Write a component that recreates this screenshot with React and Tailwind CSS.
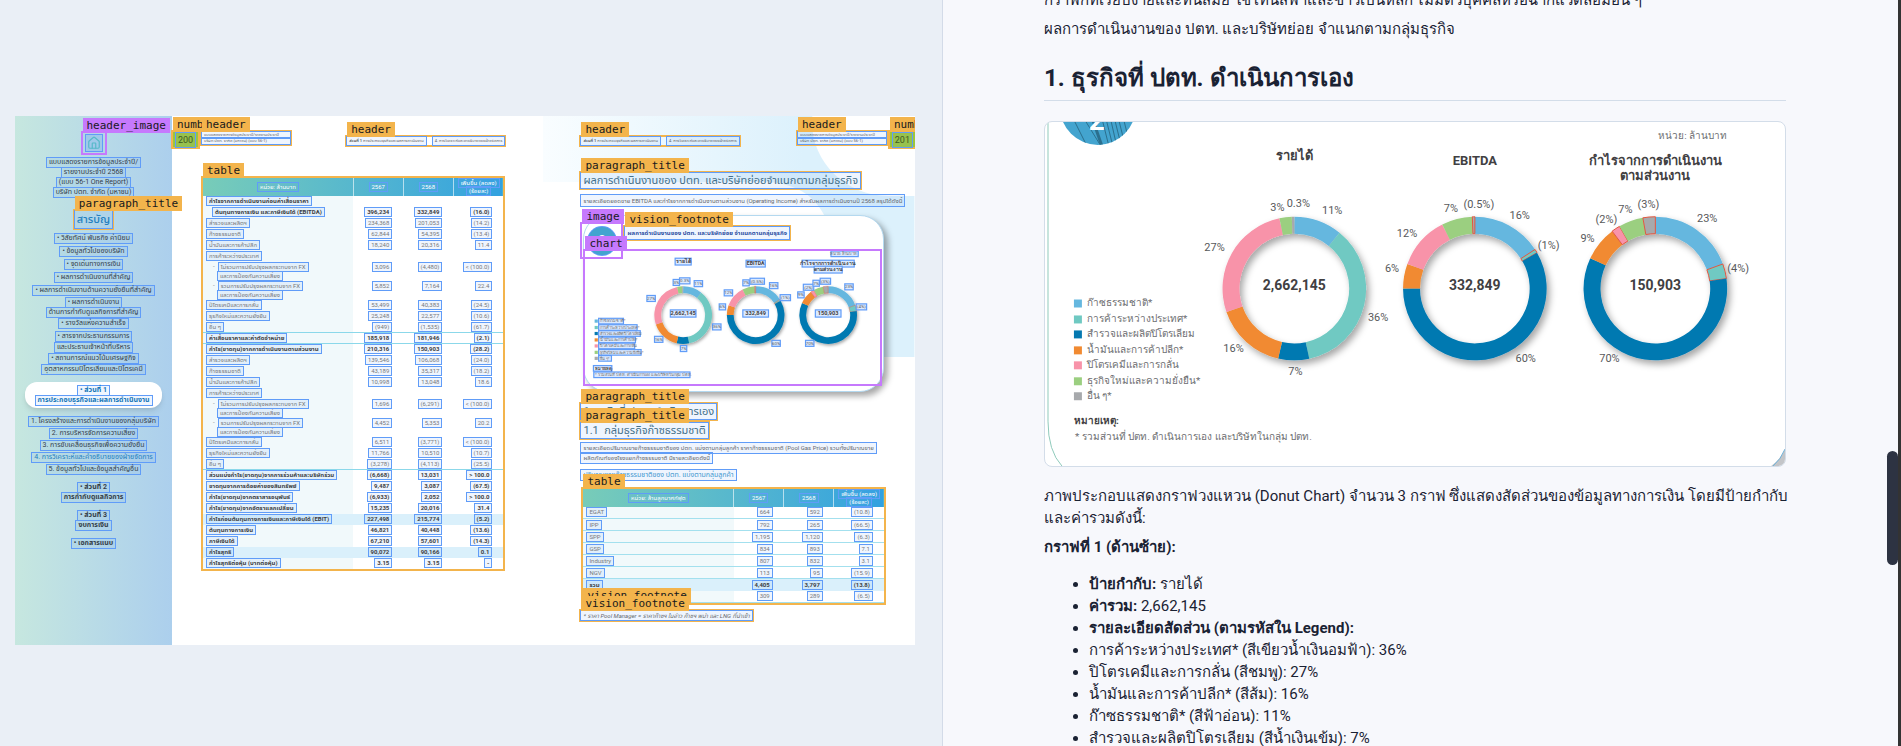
import clsx from "clsx";
import { House } from "lucide-react";

const COLORS = {
  gas: "#65b7df",
  trade: "#6fc9c2",
  explore: "#0579b1",
  oil: "#f18a31",
  petro: "#f893a9",
  fresh: "#9bcf80",
  other: "#a7a9ac",
};

const LEGEND = [
  { color: COLORS.gas, text: "ก๊าซธรรมชาติ*", width: 56 },
  { color: COLORS.trade, text: "การค้าระหว่างประเทศ*", width: 90 },
  { color: COLORS.explore, text: "สำรวจและผลิตปิโตรเลียม", width: 98 },
  { color: COLORS.oil, text: "น้ำมันและการค้าปลีก*", width: 86 },
  { color: COLORS.petro, text: "ปิโตรเคมีและการกลั่น", width: 84 },
  { color: COLORS.fresh, text: "ธุรกิจใหม่และความยั่งยืน*", width: 100 },
  { color: COLORS.other, text: "อื่น ๆ*", width: 26 },
];

// start angles in degrees, clockwise from the top
const DONUTS = [
  {
    cx: 250,
    total: "2,662,145",
    title: [["รายได้", 38, 34]],
    slices: [
      [0, 39, "gas"],
      [39, 168, "trade"],
      [168, 193, "explore"],
      [193, 251, "oil"],
      [251, 348, "petro"],
      [348, 358, "fresh"],
      [358, 360, "other"],
    ],
    labels: [
      ["3%", 233, 89],
      ["0.3%", 254, 85],
      ["11%", 288, 92],
      ["27%", 170, 129],
      ["36%", 334, 200],
      ["16%", 189, 231],
      ["7%", 251, 254],
    ],
  },
  {
    cx: 431,
    total: "332,849",
    title: [["EBITDA", 43, 42]],
    slices: [
      [0, 57, "gas"],
      [57, 60, "trade", true],
      [60, 270, "explore"],
      [270, 290, "oil"],
      [290, 333, "petro"],
      [333, 358, "fresh"],
      [358, 360, "other", true],
    ],
    labels: [
      ["7%", 407, 90],
      ["(0.5%)", 435, 86],
      ["16%", 476, 97],
      ["(1%)", 505, 127],
      ["12%", 363, 115],
      ["6%", 348, 150],
      ["60%", 482, 241],
    ],
  },
  {
    cx: 612,
    total: "150,903",
    title: [
      ["กำไรจากการดำเนินงาน", 43, 124],
      ["ตามส่วนงาน", 58, 64],
    ],
    slices: [
      [0, 70, "gas"],
      [70, 82, "trade", true],
      [82, 295, "explore"],
      [295, 323, "oil"],
      [323, 330, "petro", true],
      [330, 350, "fresh"],
      [350, 360, "other", true],
    ],
    labels: [
      ["(2%)", 563, 101],
      ["7%", 582, 91],
      ["(3%)", 605, 86],
      ["23%", 664, 100],
      ["9%", 544, 120],
      ["(4%)", 695, 150],
      ["70%", 566, 241],
    ],
  },
];

const CY = 167;

function slicePath(cx, from, to) {
  const point = (r, deg) => {
    const a = (deg * Math.PI) / 180;
    return `${cx + r * Math.sin(a)} ${CY - r * Math.cos(a)}`;
  };
  const large = to - from > 180 ? 1 : 0;
  return `M${point(72, from)} A72 72 0 ${large} 1 ${point(72, to)} L${point(55, to)} A55 55 0 ${large} 0 ${point(55, from)}Z`;
}

function ChartText({ boxed, x, y, width, size, className, anchor = "middle", children }) {
  const left = anchor === "middle" ? x - width / 2 : anchor === "end" ? x - width : x;
  return (
    <>
      {boxed && (
        <rect
          x={left - 3}
          y={y - size}
          width={width + 6}
          height={size + 4}
          fill="#dbe9fe"
          stroke="#609cf8"
          strokeWidth="3"
        />
      )}
      <text x={x} y={y} textAnchor={anchor} fontSize={size} className={className}>
        {children}
      </text>
    </>
  );
}

function DonutChart({ boxed = false, viewBox, className }) {
  const id = boxed ? "shadow-thumb" : "shadow-full";
  return (
    <svg viewBox={viewBox} className={clsx("block font-['Roboto','Noto_Sans',sans-serif]", className)} role="img">
      <defs>
        <filter id={id} x="-20%" y="-20%" width="140%" height="140%">
          <feDropShadow dx="3" dy="4" stdDeviation="4" floodColor="#000" floodOpacity="0.35" />
        </filter>
        <clipPath id={`${id}-logo`}>
          <circle cx="53" cy="-15" r="38" />
        </clipPath>
      </defs>
      {!boxed && (
        <>
          <circle cx="53" cy="-15" r="38" fill="#43a4cf" />
          <g clipPath={`url(#${id}-logo)`} stroke="#2b6f8e" strokeWidth="1" fill="none">
            <path d="M30 0 42 24M40 -2 56 24M58 0 64 24M62 0 68 24M66 -2 71 20M70 -2 75 18M74 -2 78 14M79 -2 82 10" />
            <path d="M48 -2 57 24" strokeWidth="3" />
          </g>
          <text x="52" y="8" textAnchor="middle" fontSize="28" className="fill-white font-bold">
            2
          </text>
          <path d="M3 0V300Q3 330 17 345" fill="none" stroke="#8fcabb" strokeWidth="1" />
          <path d="M742 328Q738 338 728 345H742Z" fill="#c3c5c8" />
          <path d="M742 328Q738 338 730 345" fill="none" stroke="#6fb3da" strokeWidth="1" />
        </>
      )}
      <ChartText boxed={boxed} x={684} y={17} width={62} size={10} anchor="end" className="fill-[#6d6e71]">
        หน่วย: ล้านบาท
      </ChartText>
      {DONUTS.map((d) => (
        <g key={d.total}>
          {d.title.map(([line, y, width]) => (
            <ChartText
              key={line}
              boxed={boxed}
              x={d.cx}
              y={y}
              width={width}
              size={13}
              className="fill-[#414042] font-bold"
            >
              {line}
            </ChartText>
          ))}
          <g filter={`url(#${id})`}>
            {d.slices.map(([from, to, name, negative]) => (
              <path
                key={name}
                d={slicePath(d.cx, from, to)}
                fill={COLORS[name]}
                stroke={negative ? "#e2563f" : "none"}
                strokeWidth="1"
              />
            ))}
          </g>
          <ChartText boxed={boxed} x={d.cx} y={168} width={58} size={14} className="fill-[#414042] font-bold">
            {d.total}
          </ChartText>
          {d.labels.map(([text, x, y]) => (
            <ChartText
              key={text}
              boxed={boxed}
              x={x}
              y={y}
              width={text.length * 5}
              size={11}
              className="fill-[#58595b]"
            >
              {text}
            </ChartText>
          ))}
        </g>
      ))}
      {LEGEND.map((item, i) => (
        <g key={item.text}>
          <rect x="29" y={178 + Math.round(i * 15.5)} width="8" height="8" fill={item.color} />
          <ChartText
            boxed={boxed}
            x={42}
            y={185 + Math.round(i * 15.5)}
            width={item.width}
            size={10}
            anchor="start"
            className="fill-[#6d6e71]"
          >
            {item.text}
          </ChartText>
        </g>
      ))}
      <ChartText boxed={boxed} x={29} y={303} width={40} size={10} anchor="start" className="fill-[#414042] font-bold">
        หมายเหตุ:
      </ChartText>
      <ChartText boxed={boxed} x={30} y={319} width={234} size={10} anchor="start" className="fill-[#6d6e71]">
        * รวมส่วนที่ ปตท. ดำเนินการเอง และบริษัทในกลุ่ม ปตท.
      </ChartText>
    </svg>
  );
}

// Blue outline around one recognised run of text
function Word({ className, children }) {
  return (
    <span
      className={clsx(
        "inline-block whitespace-nowrap bg-[#609cf8]/10 px-[2px] align-middle ring-1 ring-[#609cf8]",
        className
      )}
    >
      {children}
    </span>
  );
}

function Tag({ tone = "orange", className, children }) {
  return (
    <span
      className={clsx(
        "absolute z-10 whitespace-nowrap px-1 font-['DejaVu_Sans_Mono',monospace] text-[11px] leading-[15px] font-normal text-[#17191c]",
        tone === "orange" ? "bg-[#f3b44c]" : "bg-[#c679fd]",
        className
      )}
    >
      {children}
    </span>
  );
}

function Region({ label, tone = "orange", className, children }) {
  return (
    <div
      className={clsx(
        "relative shrink-0 ring-2",
        tone === "orange" ? "ring-[#f3b44c]" : "ring-[#c679fd]",
        className
      )}
    >
      <Tag tone={tone} className="bottom-full left-0">
        {label}
      </Tag>
      {children}
    </div>
  );
}

const TOC = [
  ["• วิสัยทัศน์ พันธกิจ ค่านิยม", "h-[13px]"],
  ["• ข้อมูลทั่วไปของบริษัท", "h-[13px]"],
  ["• จุดเด่นทางการเงิน", "h-[13px]"],
  ["• ผลการดำเนินงานที่สำคัญ", "h-[13px]"],
  ["• ผลการดำเนินงานด้านความยั่งยืนที่สำคัญ", "h-[13px]"],
  ["• ผลการดำเนินงาน", "h-[10px]"],
  ["ด้านการกำกับดูแลกิจการที่สำคัญ", "h-[10px]"],
  ["• รางวัลแห่งความสำเร็จ", "h-[13px]"],
  ["• สารจากประธานกรรมการ", "h-[12px]"],
  ["และประธานเจ้าหน้าที่บริหาร", "h-[10px]"],
  ["• สถานการณ์แนวโน้มเศรษฐกิจ", "h-[12px]"],
  ["อุตสาหกรรมปิโตรเลียมและปิโตรเคมี", "h-[10px]"],
];

const CHAPTERS = [
  "1. โครงสร้างและการดำเนินงานของกลุ่มบริษัท",
  "2. การบริหารจัดการความเสี่ยง",
  "3. การขับเคลื่อนธุรกิจเพื่อความยั่งยืน",
  "4. การวิเคราะห์และคำอธิบายของฝ่ายจัดการ",
  "5. ข้อมูลทั่วไปและข้อมูลสำคัญอื่น",
];

function Line({ className = "h-[10px]", children }) {
  return (
    <div className={clsx("flex items-center justify-center", className)}>
      <Word className="leading-[9px]">{children}</Word>
    </div>
  );
}

function Sidebar() {
  return (
    <nav className="w-[157px] shrink-0 bg-linear-to-r from-[#c6e7df] to-[#accfed] pt-[17px] pb-[97px] text-[7px] text-[#34404a]">
      <Region label="header_image" tone="purple" className="mx-auto w-fit">
        <div className="flex h-5 w-[22px] items-center justify-center bg-[#b4d7e6]">
          <div className="flex size-4 items-center justify-center bg-[#9fc9ea] ring-1 ring-[#609cf8]">
            <House className="size-[14px] text-[#56b9c9]" strokeWidth={2} />
          </div>
        </div>
      </Region>
      <div className="mt-1">
        <Line>แบบแสดงรายการข้อมูลประจำปี/</Line>
        <Line>รายงานประจำปี 2568</Line>
        <Line>(แบบ 56-1 One Report)</Line>
        <Line>บริษัท ปตท. จำกัด (มหาชน)</Line>
      </div>
      <Region label="paragraph_title" className="mx-auto mt-[14px] w-fit">
        <Word className="h-[17px] text-[11px] leading-[17px] font-medium text-[#2380c0]">สารบัญ</Word>
      </Region>
      <div className="mt-1">
        {TOC.map(([text, height]) => (
          <Line key={text} className={height}>
            {text}
          </Line>
        ))}
      </div>
      <div className="mx-[10px] mt-2 rounded-xl bg-white py-[3px] font-bold text-[#1476b8] shadow-md">
        <Line>• ส่วนที่ 1</Line>
        <Line>การประกอบธุรกิจและผลการดำเนินงาน</Line>
      </div>
      <div className="mt-[7px]">
        {CHAPTERS.map((text, i) => (
          <Line key={text} className={i === 3 ? "h-3 text-[#2380c0]" : "h-3"}>
            {text}
          </Line>
        ))}
      </div>
      <div className="mt-[7px] font-bold">
        <Line>• ส่วนที่ 2</Line>
        <Line>การกำกับดูแลกิจการ</Line>
      </div>
      <div className="mt-2 font-bold">
        <Line>• ส่วนที่ 3</Line>
        <Line>งบการเงิน</Line>
      </div>
      <div className="mt-2 font-bold">
        <Line>• เอกสารแนบ</Line>
      </div>
    </nav>
  );
}

const TRADE_FX = "ไม่รวมการปรับปรุงผลกระทบจาก FX";
const TRADE_FX_ALL = "รวมการปรับปรุงผลกระทบจาก FX";
const HEDGE = "และการป้องกันความเสี่ยง";

const RESULTS = [
  { kind: "bold", cells: ["กำไรจากการดำเนินงานก่อนค่าเสื่อมราคา"] },
  { kind: "boldIndent", cells: ["ต้นทุนทางการเงิน และภาษีเงินได้ (EBITDA)", "396,234", "332,849", "(16.0)"] },
  { cells: ["สำรวจและผลิตฯ", "234,368", "201,053", "(14.2)"] },
  { cells: ["ก๊าซธรรมชาติ", "62,844", "54,395", "(13.4)"] },
  { cells: ["น้ำมันและการค้าปลีก", "18,240", "20,316", "11.4"] },
  { cells: ["การค้าระหว่างประเทศ"] },
  { kind: "sub", cells: [TRADE_FX, "3,096", "(4,480)", "< (100.0)"] },
  { kind: "cont", cells: [HEDGE] },
  { kind: "sub", cells: [TRADE_FX_ALL, "5,852", "7,164", "22.4"] },
  { kind: "cont", cells: [HEDGE] },
  { cells: ["ปิโตรเคมีและการกลั่น", "53,499", "40,383", "(24.5)"] },
  { cells: ["ธุรกิจใหม่และความยั่งยืน", "25,248", "22,577", "(10.6)"] },
  { cells: ["อื่น ๆ", "(949)", "(1,535)", "(61.7)"] },
  { kind: "ruled", cells: ["ค่าเสื่อมราคาและค่าตัดจำหน่าย", "185,918", "181,946", "(2.1)"] },
  { kind: "bold", cells: ["กำไร(ขาดทุน)จากการดำเนินงานตามส่วนงาน", "210,316", "150,903", "(28.2)"] },
  { cells: ["สำรวจและผลิตฯ", "139,546", "106,068", "(24.0)"] },
  { cells: ["ก๊าซธรรมชาติ", "43,189", "35,317", "(18.2)"] },
  { cells: ["น้ำมันและการค้าปลีก", "10,998", "13,048", "18.6"] },
  { cells: ["การค้าระหว่างประเทศ"] },
  { kind: "sub", cells: [TRADE_FX, "1,696", "(6,291)", "< (100.0)"] },
  { kind: "cont", cells: [HEDGE] },
  { kind: "sub", cells: [TRADE_FX_ALL, "4,452", "5,353", "20.2"] },
  { kind: "cont", cells: [HEDGE] },
  { cells: ["ปิโตรเคมีและการกลั่น", "6,511", "(3,771)", "< (100.0)"] },
  { cells: ["ธุรกิจใหม่และความยั่งยืน", "11,766", "10,510", "(10.7)"] },
  { cells: ["อื่น ๆ", "(3,278)", "(4,113)", "(25.5)"] },
  { kind: "topRule", cells: ["ส่วนแบ่งกำไร(ขาดทุน)จากการร่วมค้าและบริษัทร่วม", "(6,668)", "13,031", "> 100.0"] },
  { kind: "bold", cells: ["ขาดทุนจากการด้อยค่าของสินทรัพย์", "9,487", "3,087", "(67.5)"] },
  { kind: "bold", cells: ["กำไร(ขาดทุน)จากตราสารอนุพันธ์", "(6,933)", "2,052", "> 100.0"] },
  { kind: "bold", cells: ["กำไร(ขาดทุน)จากอัตราแลกเปลี่ยน", "15,235", "20,016", "31.4"] },
  { kind: "total", cells: ["กำไรก่อนต้นทุนทางการเงินและภาษีเงินได้ (EBIT)", "227,498", "215,774", "(5.2)"] },
  { kind: "bold", cells: ["ต้นทุนทางการเงิน", "46,821", "40,448", "(13.6)"] },
  { kind: "bold", cells: ["ภาษีเงินได้", "67,210", "57,601", "(14.3)"] },
  { kind: "total", cells: ["กำไรสุทธิ", "90,072", "90,166", "0.1"] },
  { kind: "bold", cells: ["กำไรสุทธิต่อหุ้น (บาทต่อหุ้น)", "3.15", "3.15", "-"] },
];

const GAS = [
  { kind: "line", cells: ["EGAT", "664", "592", "(10.8)"] },
  { kind: "line", cells: ["IPP", "792", "265", "(66.5)"] },
  { kind: "line", cells: ["SPP", "1,195", "1,120", "(6.3)"] },
  { kind: "line", cells: ["GSP", "834", "893", "7.1"] },
  { kind: "line", cells: ["Industry", "807", "832", "3.1"] },
  { kind: "line", cells: ["NGV", "113", "95", "(15.9)"] },
  { kind: "total", cells: ["รวม", "4,405", "3,797", "(13.8)"] },
  { kind: "line", cells: ["", "309", "289", "(6.5)"] },
];

const ROW_STYLE = {
  bold: "font-bold text-[#3c4043]",
  boldIndent: "font-bold text-[#3c4043]",
  ruled: "border-y border-[#8bd8ea] font-bold text-[#3c4043]",
  topRule: "border-t border-[#8bd8ea] font-bold text-[#3c4043]",
  total: "bg-[#daf0fb] font-bold text-[#3c4043]",
  line: "border-b border-[#a3e0ee]",
};

function ReportTable({ unit, rows, rowHeight }) {
  return (
    <table className="w-full table-fixed border-collapse text-[6px] leading-[8px] text-[#77797c]">
      <thead>
        <tr className="h-[18px] bg-linear-to-r from-[#78ccb8] to-[#31a1e0] text-white">
          <th className="w-1/2 border-r border-white/60 p-0 font-normal">
            <Word>{unit}</Word>
          </th>
          <th className="border-r border-white/60 p-0 font-normal">
            <Word>2567</Word>
          </th>
          <th className="border-r border-white/60 p-0 font-normal">
            <Word>2568</Word>
          </th>
          <th className="p-0 font-normal">
            <Word>เพิ่มขึ้น (ลดลง)</Word>
            <Word>(ร้อยละ)</Word>
          </th>
        </tr>
      </thead>
      <tbody>
        {rows.map(({ kind, cells }, i) => (
          <tr
            key={i}
            className={clsx(
              kind === "cont" ? "h-[9px]" : kind === "sub" ? "h-[10px]" : rowHeight,
              ROW_STYLE[kind]
            )}
          >
            <td
              className={clsx(
                "p-0 text-left leading-none",
                kind !== "total" && "bg-[#f1f9fb]",
                kind === "boldIndent" && "pl-[10px]",
                kind === "sub" && "pl-[10px]",
                kind === "cont" && "pl-[15px]",
                !["boldIndent", "sub", "cont"].includes(kind) && "pl-1"
              )}
            >
              {kind === "sub" && <span className="mr-1">-</span>}
              {cells[0] && <Word className="leading-[8px]">{cells[0]}</Word>}
            </td>
            {[1, 2, 3].map((n) => (
              <td key={n} className="p-0 pr-3 text-right leading-none">
                {cells[n] && <Word className="leading-[8px]">{cells[n]}</Word>}
              </td>
            ))}
          </tr>
        ))}
      </tbody>
    </table>
  );
}

function RunningTitle() {
  return (
    <Region label="header" className="mt-[5px] flex w-fit gap-[7px] text-[4px] leading-[8px] text-[#5c6064]">
      <Word>
        <b>ส่วนที่ 1</b> การประกอบธุรกิจและผลการดำเนินงาน
      </Word>
      <Word>4. การวิเคราะห์และคำอธิบายของฝ่ายจัดการ</Word>
    </Region>
  );
}

function RunningReport() {
  return (
    <Region label="header" className="flex w-[88px] flex-col text-[4px] leading-[6px] text-[#5c6064]">
      <Word>แบบแสดงรายการข้อมูลประจำปี/รายงานประจำปี</Word>
      <Word>บริษัท ปตท. จำกัด (มหาชน) (แบบ 56-1)</Word>
    </Region>
  );
}

function PageNumber({ children }) {
  return (
    <Region label="number" className="w-[25px] bg-[#9dc63c] text-center text-[9px] leading-[14px] text-[#3e5a20]">
      <Word>{children}</Word>
    </Region>
  );
}

function LeftPage() {
  return (
    <section className="min-w-0 flex-1 pt-4">
      <div className="flex items-start justify-between pr-[39px] pl-px">
        <div className="flex items-start gap-1">
          <PageNumber>200</PageNumber>
          <RunningReport />
        </div>
        <RunningTitle />
      </div>
      <div className="relative mt-[31px] mr-[40px] ml-[31px] ring-2 ring-[#f3b44c]">
        <Tag className="bottom-full left-0">table</Tag>
        <ReportTable unit="หน่วย: ล้านบาท" rows={RESULTS} rowHeight="h-[11px]" />
      </div>
    </section>
  );
}

function RightPage() {
  return (
    <section className="relative min-w-0 flex-1 overflow-hidden pt-4">
      <svg className="absolute inset-0 size-full" viewBox="0 0 371 529" preserveAspectRatio="none" aria-hidden="true">
        <defs>
          <linearGradient id="sky" x1="0" x2="1">
            <stop offset="0" stopColor="#f9fdff" />
            <stop offset="0.7" stopColor="#dcf1fc" />
            <stop offset="1" stopColor="#dcf1fc" />
          </linearGradient>
        </defs>
        <path
          d="M0 0H269C265 42 300 80 345 80H371V241H290V130C285 90 262 66 220 66H0Z"
          fill="url(#sky)"
        />
      </svg>
      <div className="relative flex flex-col pl-[38px] text-[6px] text-[#66696d]">
        <div className="flex items-start justify-between">
          <RunningTitle />
          <div className="flex items-start gap-1">
            <RunningReport />
            <PageNumber>201</PageNumber>
          </div>
        </div>

        <Region label="paragraph_title" className="mt-[26px] flex w-fit">
          <Word className="text-[11px] leading-[15px] text-[#44708a]">
            ผลการดำเนินงานของ ปตท. และบริษัทย่อยจำแนกตามกลุ่มธุรกิจ
          </Word>
        </Region>
        <Word className="mt-[7px] w-fit leading-[11px]">
          รายละเอียดยอดขาย EBITDA และกำไรจากการดำเนินงานตามส่วนงาน (Operating Income) สำหรับผลการดำเนินงานปี 2568 สรุปได้ดังนี้
        </Word>

        <div className="mt-[9px] mr-[31px] ml-[2px] rounded-3xl border border-[#b4d9f0] bg-white pt-2 pb-[7px] shadow-[4px_4px_6px_rgba(0,0,0,0.35)]">
          <div className="-ml-[2px] flex items-start gap-1">
            <Region label="image" tone="purple" className="flex h-[33px] w-[39px] justify-center pt-[3px]">
              <div className="size-7 rounded-full bg-[#43a4cf] text-center text-[14px] leading-7 font-bold text-white ring-1 ring-[#609cf8]">
                2
              </div>
            </Region>
            <Region label="vision_footnote" className="mt-[3px] flex w-fit">
              <Word className="text-[6px] leading-3 font-bold text-[#2b4ea2]">
                ผลการดำเนินงานของ ปตท. และบริษัทย่อย จำแนกตามกลุ่มธุรกิจ
              </Word>
            </Region>
          </div>
          <div className="relative -mt-[6px] mr-[3px] ml-px ring-2 ring-[#c679fd]">
            <Tag tone="purple" className="bottom-full left-0">
              chart
            </Tag>
            <DonutChart boxed viewBox="5 7 735 332" className="w-full" />
          </div>
        </div>

        <Region label="paragraph_title" className="mt-3 flex w-fit">
          <Word className="text-[11px] leading-[15px] text-[#44708a]">1. ธุรกิจที่ ปตท. ดำเนินการเอง</Word>
        </Region>
        <Region label="paragraph_title" className="mt-1 flex w-fit">
          <Word className="text-[11px] leading-[15px] text-[#44708a]">1.1&nbsp; กลุ่มธุรกิจก๊าซธรรมชาติ</Word>
        </Region>
        <Word className="mt-[5px] w-fit leading-[10px]">
          รายละเอียดปริมาณขายก๊าซธรรมชาติของ ปตท. แบ่งตามกลุ่มลูกค้า ราคาก๊าซธรรมชาติ (Pool Gas Price) รวมทั้งปริมาณขาย
        </Word>
        <Word className="w-fit leading-[10px]">ผลิตภัณฑ์ของโรงแยกก๊าซธรรมชาติ มีรายละเอียดดังนี้</Word>
        <Word className="mt-[7px] w-fit text-[7px] leading-[10px] text-[#3f97cf]">
          ปริมาณขายก๊าซธรรมชาติของ ปตท. แบ่งตามกลุ่มลูกค้า
        </Word>

        <div className="relative mt-[9px] mr-[31px] ml-[2px] ring-2 ring-[#f3b44c]">
          <Tag className="bottom-full left-0">table</Tag>
          <ReportTable unit="หน่วย: ล้านลูกบาศก์ฟุต" rows={GAS} rowHeight="h-[12px]" />
          <Tag className="bottom-0 left-0">vision_footnote</Tag>
        </div>
        <Region label="vision_footnote" className="mt-[8px] flex w-fit">
          <Word className="leading-[9px] italic">* ราคา Pool Manager = ราคาก๊าซฯ ในอ่าว ก๊าซฯ พม่า และ LNG ที่นำเข้า</Word>
        </Region>
      </div>
    </section>
  );
}

function ScanPane() {
  return (
    <div className="flex w-[49.6%] shrink-0 items-center border-r border-[#d3dbe8] bg-[#eaeff6] pt-[15px] pr-[27px] pl-[15px]">
      <div className="flex min-w-0 flex-1 bg-white font-['Roboto','Noto_Sans_Thai',sans-serif]">
        <Sidebar />
        <LeftPage />
        <RightPage />
      </div>
    </div>
  );
}

const DETAILS = [
  "การค้าระหว่างประเทศ* (สีเขียวน้ำเงินอมฟ้า): 36%",
  "ปิโตรเคมีและการกลั่น (สีชมพู): 27%",
  "น้ำมันและการค้าปลีก* (สีส้ม): 16%",
  "ก๊าซธรรมชาติ* (สีฟ้าอ่อน): 11%",
  "สำรวจและผลิตปิโตรเลียม (สีน้ำเงินเข้ม): 7%",
];

function MarkdownPane() {
  return (
    <main className="min-w-0 flex-1 overflow-hidden bg-[#f7f8fc] px-4 font-['Roboto','Noto_Sans',sans-serif] text-[15px] leading-[22px] text-[#1a2233]">
      <article className="mx-auto -mt-[11px] max-w-[742px]">
        <p>กราฟิกที่เรียบง่ายและทันสมัย ใช้โทนสีฟ้าและขาวเป็นหลัก ไม่มีตัวบุคคลหรือฉากแวดล้อมอื่น ๆ</p>
        <p className="mt-[7px]">ผลการดำเนินงานของ ปตท. และบริษัทย่อย จำแนกตามกลุ่มธุรกิจ</p>
        <h2 className="mt-[22px] border-b border-[#d3dde9] pb-[6px] text-2xl leading-8 font-bold">
          1. ธุรกิจที่ ปตท. ดำเนินการเอง
        </h2>
        <div className="mt-5 overflow-hidden rounded-lg border border-[#d3dde9] bg-white">
          <DonutChart viewBox="0 0 742 345" className="w-full" />
        </div>
        <p className="mt-[18px] xl:whitespace-nowrap">
          ภาพประกอบแสดงกราฟวงแหวน (Donut Chart) จำนวน 3 กราฟ ซึ่งแสดงสัดส่วนของข้อมูลทางการเงิน โดยมีป้ายกำกับ
          <br />
          และค่ารวมดังนี้:
        </p>
        <p className="mt-[7px] font-bold">กราฟที่ 1 (ด้านซ้าย):</p>
        <ul className="mt-[15px] list-disc pl-[45px]">
          <li>
            <strong>ป้ายกำกับ:</strong> รายได้
          </li>
          <li>
            <strong>ค่ารวม:</strong> 2,662,145
          </li>
          <li>
            <strong>รายละเอียดสัดส่วน (ตามรหัสใน Legend):</strong>
          </li>
          {DETAILS.map((text) => (
            <li key={text}>{text}</li>
          ))}
        </ul>
      </article>
    </main>
  );
}

export default function App() {
  return (
    <div className="flex h-screen overflow-hidden bg-[#f7f8fc]">
      <ScanPane />
      <MarkdownPane />
      <div className="flex w-[11px] shrink-0 flex-col">
        <div className="flex-[451]" />
        <div className="h-[114px] rounded-full bg-[#2d3342]" />
        <div className="flex-[181]" />
      </div>
      <div className="w-[3px] shrink-0 bg-[#333333]" />
    </div>
  );
}
